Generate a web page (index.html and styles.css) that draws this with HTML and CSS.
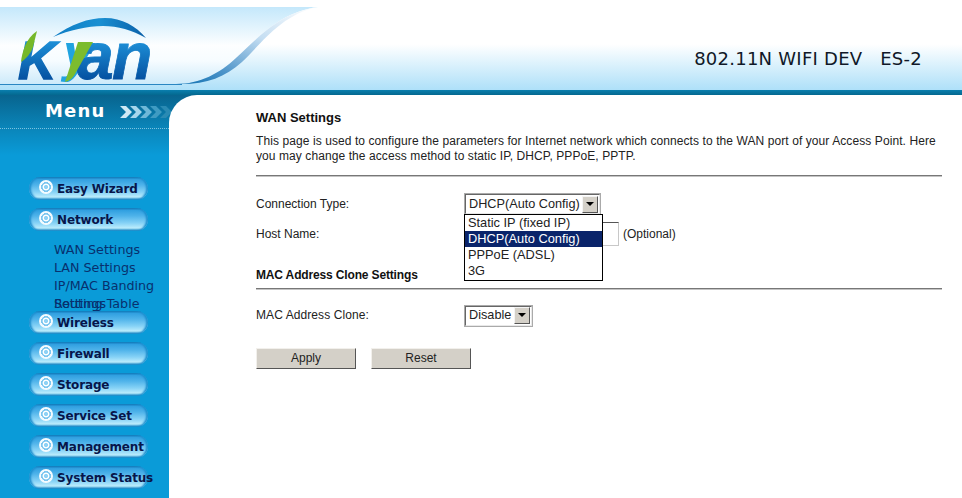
FILE: index.html
```html
<!DOCTYPE html>
<html lang="en">
<head>
<meta charset="utf-8">
<title>WAN Settings</title>
<link rel="stylesheet" href="styles.css">
</head>
<body>
<div class="page">
  <header class="header">
    <svg class="banner" width="962" height="95" viewBox="0 0 962 95" aria-hidden="true">
      <defs>
        <linearGradient id="bgRight" x1="0" y1="0" x2="0" y2="1">
          <stop offset="0" stop-color="#fff"/>
          <stop offset=".45" stop-color="#fff"/>
          <stop offset="1" stop-color="#aee0f9"/>
        </linearGradient>
        <linearGradient id="bgLeft" x1="0" y1="0" x2="0" y2="1">
          <stop offset="0" stop-color="#c4e8fb"/>
          <stop offset=".5" stop-color="#fdfeff"/>
          <stop offset=".7" stop-color="#f6fcff"/>
          <stop offset="1" stop-color="#cdeafa"/>
        </linearGradient>
        <linearGradient id="band" x1="1" y1="0" x2="0" y2="1">
          <stop offset="0" stop-color="#fff"/>
          <stop offset=".4" stop-color="#c5def2"/>
          <stop offset=".75" stop-color="#4d94c9"/>
          <stop offset="1" stop-color="#0d6fb0"/>
        </linearGradient>
        <linearGradient id="letters" gradientUnits="userSpaceOnUse" x1="0" y1="42" x2="0" y2="80">
          <stop offset="0" stop-color="#1d8ed6"/>
          <stop offset="1" stop-color="#0450a0"/>
        </linearGradient>
        <linearGradient id="arc" x1="0" y1="0" x2="1" y2="0">
          <stop offset="0" stop-color="#0e7cc4"/>
          <stop offset=".5" stop-color="#1a90d2"/>
          <stop offset="1" stop-color="#0a5fa8"/>
        </linearGradient>
        <linearGradient id="bar" x1="0" y1="0" x2="0" y2="1">
          <stop offset="0" stop-color="#0a7fae"/>
          <stop offset="1" stop-color="#04688f"/>
        </linearGradient>
      </defs>
      <rect y="7" width="962" height="83" fill="url(#bgRight)"/>
      <path d="M0 7H318C280 12 258 38 236 58C220 73 200 84 176 84H0Z" fill="url(#bgLeft)"/>
      <path d="M318 7C280 12 258 38 236 58C220 73 200 84 176 84C205 85 224 78 242 62C262 43 282 14 318 7Z" fill="url(#band)"/>
      <rect y="84" width="182" height="1" fill="#2a86c2"/>
      <rect y="90" width="962" height="5" fill="url(#bar)"/>
      <path d="M53 37C72 24 88 18 105 18C122 18 136 26 146 38C132 30 118 26 103 26C87 26 70 30 53 37Z" fill="url(#arc)"/>
      <text class="logo-letter" x="18" y="79" font-size="53" fill="url(#letters)" stroke="url(#letters)" stroke-width="1.4">K</text>
      <text class="logo-letter" x="63" y="71" font-size="54" fill="#21a3e0">y</text>
      <text class="logo-letter" x="77" y="79" font-size="66" fill="url(#letters)" stroke="url(#letters)" stroke-width=".8">a</text>
      <text class="logo-letter" x="112" y="79" font-size="66" fill="url(#letters)" stroke="url(#letters)" stroke-width=".8">n</text>
      <path d="M37 31L33 47C31 53 26 59 21 62C22 52 26 38 37 31Z" fill="#76b82a"/>
      <path d="M93 42L75 74C72 79 69 81 65 82L78 42Z" fill="#7cbc2e"/>
    </svg>
    <div class="device">802.11N WIFI DEV &nbsp; ES-2</div>
  </header>

  <div class="main">
    <nav class="sidebar">
      <div class="menu-title">
        <span class="menu-label">Menu</span>
        <svg class="chevrons" width="52" height="16" viewBox="0 0 52 16" aria-hidden="true">
          <path d="M0 2H6L12 8L6 14H0L6 8Z" fill="#cfe9f5"/>
          <path d="M10 2H16L22 8L16 14H10L16 8Z" fill="#a6d6ec"/>
          <path d="M20 2H26L32 8L26 14H20L26 8Z" fill="#6fb8d8" />
          <path d="M30 2H36L42 8L36 14H30L36 8Z" fill="#3f9bc2"/>
          <path d="M40 2H46L52 8L46 14H40L46 8Z" fill="#2a8ab3"/>
        </svg>
      </div>
      <div class="menu-list">
        <a class="menu-btn"><span class="ring"></span>Easy Wizard</a>
        <a class="menu-btn"><span class="ring"></span>Network</a>
        <div class="submenu">
          <a>WAN Settings</a>
          <a>LAN Settings</a>
          <a>IP/MAC Banding</a>
          <div class="overlap"><a>Settings</a><a class="overlap-top">Routing Table</a></div>
        </div>
        <a class="menu-btn"><span class="ring"></span>Wireless</a>
        <a class="menu-btn"><span class="ring"></span>Firewall</a>
        <a class="menu-btn"><span class="ring"></span>Storage</a>
        <a class="menu-btn"><span class="ring"></span>Service Set</a>
        <a class="menu-btn"><span class="ring"></span>Management</a>
        <a class="menu-btn"><span class="ring"></span>System Status</a>
      </div>
    </nav>

    <main class="content">
      <h1 class="title">WAN Settings</h1>
      <p class="intro">This page is used to configure the parameters for Internet network which connects to the WAN port of your Access Point. Here you may change the access method to static IP, DHCP, PPPoE, PPTP.</p>
      <hr class="rule">
      <div class="row row-conn">
        <label class="field-label">Connection Type:</label>
        <div class="select-wrap">
          <div class="select select-conn"><span class="select-value">DHCP(Auto Config)</span><span class="arrow"></span></div>
          <ul class="dropdown">
            <li>Static IP (fixed IP)</li>
            <li class="selected">DHCP(Auto Config)</li>
            <li>PPPoE (ADSL)</li>
            <li>3G</li>
          </ul>
        </div>
      </div>
      <div class="row row-host">
        <label class="field-label">Host Name:</label>
        <div class="input"></div>
        <span class="hint">(Optional)</span>
      </div>
      <h2 class="subtitle">MAC Address Clone Settings</h2>
      <hr class="rule rule-sub">
      <div class="row row-mac">
        <label class="field-label">MAC Address Clone:</label>
        <div class="select select-mac"><span class="select-value">Disable</span><span class="arrow"></span></div>
      </div>
      <div class="actions">
        <button class="btn" type="button">Apply</button>
        <button class="btn" type="button">Reset</button>
      </div>
    </main>
  </div>
</div>
</body>
</html>
```
FILE: styles.css
```css
* { box-sizing: border-box; }
html, body { margin: 0; padding: 0; background: #fff; }
.page { width: 962px; height: 498px; overflow: hidden; font-family: "Liberation Sans", Arial, sans-serif; }

.header { position: relative; height: 95px; display: flex; justify-content: flex-end; }
.banner { position: absolute; left: 0; top: 0; display: block; }
.logo-letter { font-family: "Liberation Sans", Arial, sans-serif; font-weight: 700; font-style: italic; }
.device { position: relative; margin: 48px 40px 0 0; height: 22px; font: 18px/22px "DejaVu Sans", Verdana, sans-serif; letter-spacing: .25px; color: #101828; white-space: pre; }

.main { display: flex; height: 403px; background: linear-gradient(#08648e 0, #0a84b8 32px, #0a9bd8 60px, #0a9bd8 100%); }
.sidebar { width: 169px; flex: none; }
.menu-title { height: 34px; display: flex; align-items: flex-start; border-bottom: 1px dotted #7cc2df; padding: 6px 0 0 45px; }
.menu-label { font: 700 18px/20px "DejaVu Sans", Verdana, sans-serif; color: #fff; letter-spacing: 1.2px; }
.chevrons { margin: 3px 0 0 14px; flex: none; }
.menu-list { display: flex; flex-direction: column; align-items: flex-start; padding: 48px 0 0 29px; gap: 8px; }
.menu-btn { position: relative; z-index: 1; display: block; width: 119px; height: 23px; border-radius: 12px; padding-left: 28px; font: 700 12px/24px "DejaVu Sans", Verdana, sans-serif; letter-spacing: -.15px; color: #07154a; white-space: nowrap; background: linear-gradient(#0b68a4 0, #2f9fe0 2px, #4fb3ea 8px, #86d2f6 15px, #bbecfc 20px, #0c7fbe 23px); box-shadow: inset 2px 0 2px #1c8fcf, inset -2px 0 2px #1c8fcf; }
.ring { position: absolute; left: 10px; top: 3px; width: 14px; height: 14px; border-radius: 50%; background: radial-gradient(circle, #8fd2f5 0 2px, #fff 2.2px 3.4px, #7cc6ef 3.6px 4.8px, #f4fbff 5px 7px); }
.submenu { display: flex; flex-direction: column; margin: 2px 0 -10px 25px; font: 12.7px/18px "DejaVu Sans", Verdana, sans-serif; color: #08306e; white-space: nowrap; }
.overlap { position: relative; height: 18px; }
.overlap-top { position: absolute; left: 0; top: 0; }

.content { flex: 1; background: #fff; border-top-left-radius: 28px; padding: 15px 20px 0 87px; color: #222; font-size: 12px; line-height: 15px; }
.title { margin: 0; font-size: 13px; line-height: 16px; font-weight: 700; color: #111; }
.intro { margin: 8px 0 0; letter-spacing: .085px; }
.rule { margin: 11px 0 0; height: 2px; border: 0; border-top: 1px solid #777; border-bottom: 1px solid #c4c4c4; }
.rule-sub { margin-top: 5px; }
.row { display: flex; align-items: center; }
.field-label { width: 208px; flex: none; }
.row-conn { margin-top: 16px; height: 22px; }
.row-host { margin-top: 7px; height: 24px; }
.row-mac { margin-top: 14px; height: 23px; }
.row-mac .field-label { letter-spacing: .08px; }
.select-wrap { position: relative; }
.select { display: flex; align-items: center; height: 22px; background: #fff; border: 2px solid; border-color: #666 #e8e8e8 #e8e8e8 #666; outline: 1px solid #aaa; outline-offset: -1px; justify-content: space-between; padding: 0 1px 0 3px; font-size: 12.7px; color: #222; }
.select-conn { width: 137px; }
.select-mac { width: 69px; }
.arrow { position: relative; width: 16px; height: 17px; background: #d4d0c8; border: 1px solid; border-color: #f4f4f4 #555 #555 #f4f4f4; flex: none; }
.arrow::after { content: ""; position: absolute; left: 3px; top: 5px; border: 4px solid transparent; border-top: 4px solid #000; border-bottom: 0; }
.dropdown { position: absolute; z-index: 2; left: 0; top: 21px; width: 139px; margin: 0; padding: 0 0 1px; list-style: none; background: #fff; border: 1px solid #000; font-size: 12.8px; line-height: 16px; color: #222; }
.dropdown li { height: 16px; padding-left: 3px; white-space: nowrap; }
.dropdown .selected { background: #0a246a; color: #fff; }
.input { width: 155px; height: 24px; background: #fff; border: 1px solid; border-color: #555 #c8c8c8 #c8c8c8 #555; }
.hint { margin-left: 4px; }
.subtitle { margin: 22px 0 0; font-size: 12px; line-height: 15px; font-weight: 700; letter-spacing: -.15px; color: #111; }
.actions { display: flex; gap: 15px; margin-top: 21px; }
.btn { width: 100px; height: 21px; padding: 0; background: #d4d0c8; border: 1px solid; border-color: #f2f0ec #555 #555 #f2f0ec; font: 12px/15px "Liberation Sans", Arial, sans-serif; color: #222; }
```
